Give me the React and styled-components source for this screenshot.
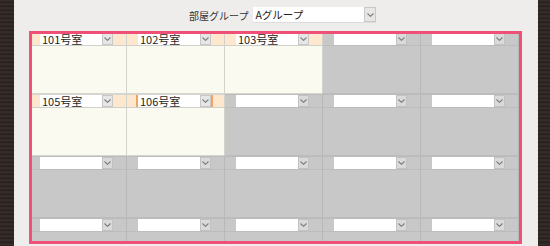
import React from 'react'
import styled, { createGlobalStyle } from 'styled-components'

const GlobalStyle = createGlobalStyle`
  body {
    margin: 0;
    background: #2a2220;
    font-family: "Noto Sans CJK JP", "Noto Sans", sans-serif;
  }
`;

const Page = styled.div`
  width: 550px;
  height: 246px;
  display: flex;
  background: repeating-linear-gradient(0deg, #2a2220 0px, #3a302c 2px, #221c1a 4px);
`;

const Panel = styled.div`
  margin-left: 14px;
  width: 524px;
  height: 246px;
  background: #eeedeb;
  display: flex;
  flex-direction: column;
`;

const Toolbar = styled.div`
  display: flex;
  align-items: center;
  gap: 5px;
  height: 16px;
  padding: 7px 0 0 175px;
`;

const Label = styled.span`
  font-size: 10px;
  color: #333;
  white-space: nowrap;
`;

const GroupSelect = styled.div`
  width: 123px;
  height: 16px;
  display: flex;
  background: #fff;
  box-sizing: border-box;
  border-bottom: 1px solid #dcdcdc;
`;

const GroupValue = styled.div`
  flex: 1;
  font-size: 10.5px;
  line-height: 16px;
  padding-left: 2px;
  color: #222;
`;

const Btn = styled.div`
  width: ${p => p.$w}px;
  display: flex;
  align-items: center;
  justify-content: center;
  background: ${p => (p.$dark ? '#dadada' : '#e6e6e6')};
  box-sizing: border-box;
  border: 1px solid ${p => (p.$dark ? '#c2c2c2' : '#c8c8c8')};
`;

const Frame = styled.div`
  margin: 8px 0 0 15px;
  width: 487px;
  height: 207px;
  border: 3px solid #ee5078;
  overflow: hidden;
`;

const Grid = styled.div`
  display: grid;
  grid-template-columns: 95px repeat(4, 98px);
  margin-top: -2px;
`;

const Cell = styled.div`
  display: flex;
  flex-direction: column;
  border-right: 1px solid ${p => (p.$room ? '#d3d3cc' : '#b8b8b8')};
`;

const CellHead = styled.div`
  height: 12px;
  display: flex;
  padding-left: ${p => (p.$first ? 8 : 11)}px;
  background: ${p => (p.$room ? '#fde8cf' : '#c8c8c8')};
  border-top: 1px solid ${p => (p.$room ? '#d6d6d0' : '#bcbcbc')};
  border-bottom: 1px solid ${p => (p.$room ? '#d0d0ca' : '#bcbcbc')};
`;

const RoomSelect = styled.div`
  width: 73px;
  height: 12px;
  display: flex;
  box-shadow: ${p => (p.$active ? '-2px 0 0 #f4a262, 2px 0 0 #f4a262' : 'none')};
`;

const RoomValue = styled.div`
  flex: 1;
  background: #fff;
  font-size: 11px;
  line-height: 13px;
  padding-left: 2px;
  color: #1e1e1e;
  white-space: nowrap;
  overflow: visible;
`;

const CellBody = styled.div`
  height: 47px;
  background: ${p => (p.$room ? '#fafaf0' : '#c8c8c8')};
  border-bottom: 1px solid ${p => (p.$room ? '#d6d6d0' : '#bcbcbc')};
`;

const Chevron = () => (
  <svg width="7" height="4" viewBox="0 0 7 4">
    <polyline points="0.5,0.5 3.5,3.3 6.5,0.5" fill="none" stroke="#7a7a7a" strokeWidth="1.1" />
  </svg>
);

const rows = [
  ['101号室', '102号室', '103号室', null, null],
  ['105号室', '106号室', null, null, null],
  [null, null, null, null, null],
  [null, null, null, null, null],
];

const App = () => {
  return (
    <Page>
      <GlobalStyle />
      <Panel>
        <Toolbar>
          <Label>部屋グループ</Label>
          <GroupSelect>
            <GroupValue>Aグループ</GroupValue>
            <Btn $w={12}>
              <Chevron />
            </Btn>
          </GroupSelect>
        </Toolbar>
        <Frame>
          <Grid>
            {rows.map((row, r) =>
              row.map((room, c) => (
                <Cell key={`${r}-${c}`} $room={!!room}>
                  <CellHead $room={!!room} $first={c === 0}>
                    <RoomSelect $active={room === '106号室'}>
                      <RoomValue>{room}</RoomValue>
                      <Btn $w={11} $dark={!room}>
                        <Chevron />
                      </Btn>
                    </RoomSelect>
                  </CellHead>
                  <CellBody $room={!!room} />
                </Cell>
              ))
            )}
          </Grid>
        </Frame>
      </Panel>
    </Page>
  )
}

export default App;
